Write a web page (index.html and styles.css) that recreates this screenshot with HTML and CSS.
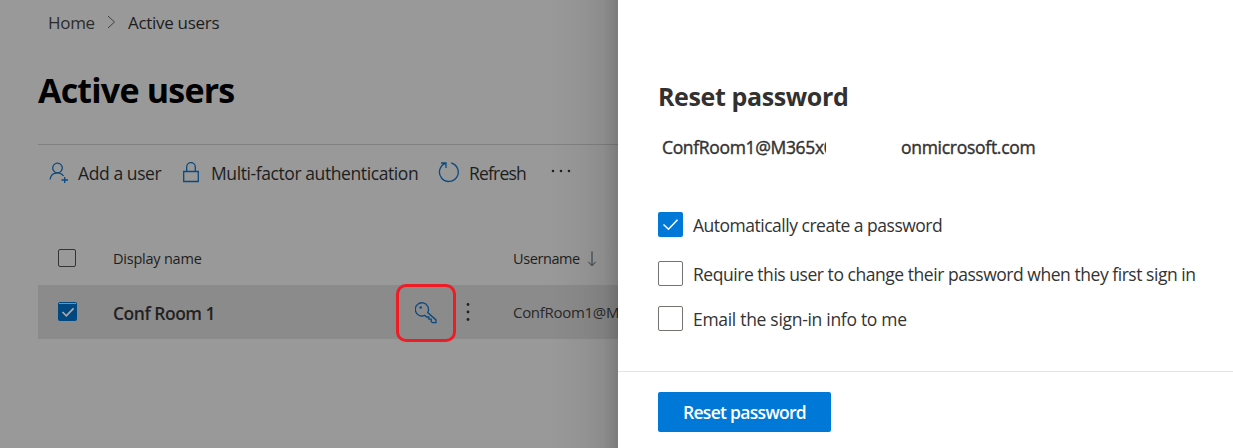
FILE: index.html
```html
<!DOCTYPE html>
<html lang="en">
<head>
<meta charset="utf-8">
<title>Active users</title>
<link rel="stylesheet" href="styles.css">
</head>
<body>
<div class="app">
  <main class="page">
    <nav class="breadcrumb">
      <span class="crumb-home">Home</span>
      <svg class="crumb-sep" width="9" height="14" viewBox="0 0 9 14"><path d="M1 1l6.5 6L1 13"/></svg>
      <span class="crumb-current">Active users</span>
    </nav>
    <h1 class="title">Active users</h1>
    <div class="toolbar">
      <div class="tool">
        <svg class="icon" width="20" height="22" viewBox="0 0 20 22"><circle cx="8.5" cy="6" r="4.8"/><path d="M1 17.500c.6-4 3.300-6.700 7.500-6.700 2.800 0 4.700 1.100 6 3.200M12.500 18h6.500M15.700 15v6"/></svg>
        <span class="label-add">Add a user</span>
      </div>
      <div class="tool tool-mfa">
        <svg class="icon" width="16" height="22" viewBox="0 0 16 22"><path d="M.7 9.500h14.600v10H.7zM3.700 9.500V5a4.300 4.300 0 0 1 8.600 0v4.500"/></svg>
        <span class="label-mfa">Multi-factor authentication</span>
      </div>
      <div class="tool tool-refresh">
        <svg class="icon" width="22" height="22" viewBox="0 0 22 22"><path d="M13.300 1a9.400 9.400 0 1 1-5.800.3M3 1h5v5"/></svg>
        <span class="label-refresh">Refresh</span>
      </div>
      <svg class="more" width="20" height="4" viewBox="0 0 20 4"><circle cx="2" cy="2" r="1.300"/><circle cx="10" cy="2" r="1.300"/><circle cx="18" cy="2" r="1.300"/></svg>
    </div>
    <div class="row row-head">
      <span class="box"></span>
      <span class="head-name">Display name</span>
      <span class="head-user">Username</span>
      <svg class="sort" width="10" height="16" viewBox="0 0 10 16"><path d="M5 .5v14M1.300 10.800L5 14.700l3.700-3.900"/></svg>
    </div>
    <div class="row row-user">
      <span class="box box-on"><svg width="19" height="19" viewBox="0 0 19 19"><path class="box-line" d="M1 1.500h17"/><path d="M4.500 10l3.800 3.800 7.300-7.500"/></svg></span>
      <span class="user-name">Conf Room 1</span>
      <span class="key-frame"><svg class="icon" width="22" height="22" viewBox="0 0 22 22"><path d="M12.700 10.500A6.600 6.600 0 1 0 9.800 13.300l1.700 1.700h2.300v2.200h2.400v2.300l1.200 1.200h3.600v-2.800z"/><circle class="dot" cx="5.700" cy="5.500" r="1.300"/></svg></span>
      <svg class="kebab" width="4" height="20" viewBox="0 0 4 20"><circle cx="2" cy="2.500" r="1.400"/><circle cx="2" cy="10" r="1.400"/><circle cx="2" cy="17.500" r="1.400"/></svg>
      <span class="user-mail">ConfRoom1@M</span>
    </div>
    <div class="shade"></div>
  </main>
  <aside class="panel">
    <div class="panel-body">
      <h2 class="panel-title">Reset password</h2>
      <div class="account">
        <span class="account-start">ConfRoom1@M365x0</span>
        <span class="account-end">onmicrosoft.com</span>
      </div>
      <div class="option">
        <span class="check check-on"><svg width="25" height="25" viewBox="0 0 25 25"><path d="M5.500 12.500l5 4.800 9-9.600"/></svg></span>
        <span class="opt-auto">Automatically create a password</span>
      </div>
      <div class="option option-require">
        <span class="check"></span>
        <span class="opt-require">Require this user to change their password when they first sign in</span>
      </div>
      <div class="option option-email">
        <span class="check"></span>
        <span class="opt-email">Email the sign-in info to me</span>
      </div>
    </div>
    <footer class="panel-foot">
      <button class="submit" type="button"><span>Reset password</span></button>
    </footer>
  </aside>
</div>
</body>
</html>
```

FILE: styles.css
```css
* { box-sizing: border-box; }
body { margin: 0; font-family: "Open Sans", "Noto Sans", sans-serif; overflow: hidden; }
svg { display: block; flex: none; fill: none; }
span { white-space: nowrap; }
.app { display: flex; width: 1233px; height: 448px; }

.page { position: relative; width: 618px; height: 448px; overflow: hidden; padding-left: 38px; background: #999; color: #1e1e1e; }
.shade { position: absolute; top: 0; right: 0; width: 70px; height: 448px; background: linear-gradient(to right, rgba(0,0,0,0), rgba(0,0,0,.04) 50%, rgba(0,0,0,.09) 80%, rgba(0,0,0,.2)); }

.breadcrumb { display: flex; align-items: center; height: 46px; padding: 0 0 2px 10px; font-size: 17px; color: #1d1d1d; }
.crumb-home { width: 59px; color: #2c2c2c; letter-spacing: -.3px; }
.crumb-sep { margin-right: 12px; margin-top: -1px; stroke: #3e3e3e; }
.crumb-current { letter-spacing: -.3px; }
.title { margin: 0; height: 98px; padding-top: 20px; line-height: 48px; font-size: 34px; font-weight: 700; letter-spacing: -.8px; color: #000; }

.toolbar { display: flex; height: 92px; padding: 17px 0 0 11px; border-top: 1px solid #828282; font-size: 17.5px; line-height: 22px; }
.tool { display: flex; gap: 9px; width: 134px; }
.tool-mfa { width: 255px; gap: 12px; }
.tool-refresh { width: 113px; gap: 9px; }
.icon { stroke: #0b4a80; stroke-width: 1.3; }
.dot { fill: #0b4a80; stroke: none; }
.more { margin: 7px 0 0; fill: #222; }
.label-add, .label-mfa { letter-spacing: -.41px; }
.label-refresh { letter-spacing: -.8px; }

.row { display: flex; align-items: center; padding-left: 20px; }
.row span { flex: none; }
.row-head { height: 49px; padding-bottom: 6px; font-size: 14.5px; }
.box { width: 18px; height: 18px; margin-right: 37px; border: 1px solid #333; border-radius: 2px; }
.head-name, .head-user { padding-top: 2px; }
.head-name { width: 400px; letter-spacing: -.22px; }
.head-user { width: 74px; letter-spacing: -.4px; }
.sort { margin-top: 2px; stroke: #2b3a46; }
.row-user { height: 54px; background: #8b8b8b; }
.box-on { width: 19px; height: 19px; margin: -1px 36px 0 0; border: 0; background: #004881; }
.box-on svg { stroke: #aaa; stroke-width: 1.7; }
.box-on .box-line { stroke: #8b8b8b; stroke-width: 1; }
.user-name { width: 283px; padding-top: 1px; font-size: 17.5px; font-weight: 600; letter-spacing: -.5px; color: #222; }
.key-frame { display: flex; align-items: center; justify-content: center; width: 60px; height: 58px; margin-top: 1px; border: 3px solid #ee1c25; border-radius: 10px; }
.kebab { margin: 0 43px 0 10px; fill: #222; }
.user-mail { font-size: 15px; color: #292929; letter-spacing: -.3px; }

.panel { display: flex; flex-direction: column; width: 615px; background: #fff; color: #333; }
.panel-body { height: 371px; padding: 77px 0 0 40px; }
.panel-title { margin: 0; height: 38px; line-height: 38px; font-size: 25px; font-weight: 700; letter-spacing: -.38px; color: #323130; }
.account { display: flex; height: 63px; padding: 18px 0 0 4px; line-height: 28px; font-size: 17.5px; -webkit-text-stroke: .4px #333; }
.account-start { width: 164px; margin-right: 75px; overflow: hidden; letter-spacing: -.34px; }
.account-end { letter-spacing: -.28px; }
.option { display: flex; align-items: center; gap: 10px; height: 25px; margin-top: 34px; font-size: 17.5px; }
.option-require { margin-top: 24px; }
.option-email { margin-top: 20px; }
.check { flex: none; width: 25px; height: 25px; border: 1px solid #75736f; border-radius: 2px; }
.check-on { border: 0; background: #0078d7; }
.check-on svg { stroke: #fff; stroke-width: 1.5; }
.opt-auto { letter-spacing: -.49px; }
.opt-require { letter-spacing: -.46px; }
.opt-email { letter-spacing: -.3px; }
.panel-foot { height: 77px; padding: 20px 0 0 40px; border-top: 1px solid #e4e4e4; }
.submit { width: 173px; height: 40px; padding: 0; border: 0; border-radius: 2px; background: #0078d7; color: #fff; font: 600 17.5px/40px "Open Sans", sans-serif; letter-spacing: -.7px; }
```
